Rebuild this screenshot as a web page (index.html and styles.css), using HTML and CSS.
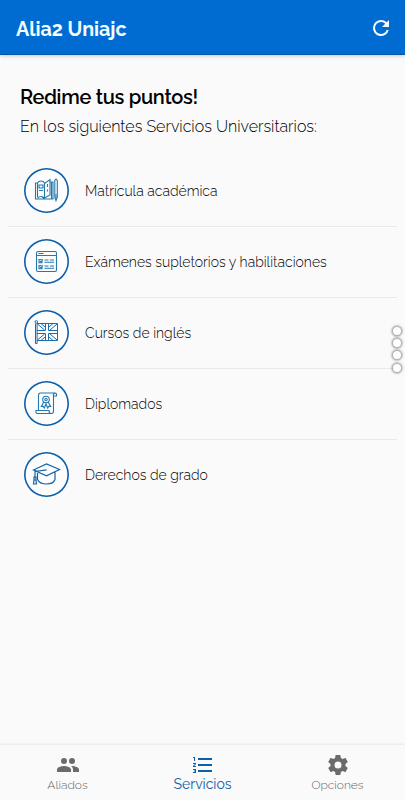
FILE: index.html
```html
<!DOCTYPE html>
<html lang="es">

<head>
    <meta charset="UTF-8">
    <meta name="viewport" content="width=device-width, initial-scale=1.0">
    <title>Alia2 Uniajc</title>
    <link rel="stylesheet" href="styles.css">
</head>

<body>
    <header class="app-bar">
        <h1 class="app-title">Alia2 Uniajc</h1>
        <svg class="refresh" viewBox="0 0 24 24">
            <path d="M17.65 6.35A7.96 7.96 0 0 0 12 4a8 8 0 1 0 7.73 10h-2.08A6 6 0 1 1 12 6c1.66 0 3.14.69 4.22 1.78L13 11h7V4z" />
        </svg>
    </header>

    <main class="content">
        <div class="intro">
            <h2 class="intro-title">Redime tus puntos!</h2>
            <p class="intro-text">En los siguientes Servicios Universitarios:</p>
        </div>

        <ul class="services">
            <li class="service">
                <span class="service-icon">
                    <!-- Books and pencil -->
                    <svg viewBox="0 0 46 46">
                        <path d="M14.500 30V16q1-2 3.500-2t3.500 2v15q-1.500-1.500-3.500-1.500T14.500 31M21.500 31V16.500l5.500-4V28l-5.500 3M27 15h3v17H12.500V16h2M28.500 15v17M16 18h4v3h-4zM16 23.500h4M24.500 17v3M24.500 22.500v2M19 30l2.500 1.500" />
                        <path d="M31.800 30V13.500l1.200-1.500 1.300 1.500V30zM31.800 30l1.200 3.500 1.300-3.500M32 28h2" />
                    </svg>
                </span>
                <span class="service-name">Matrícula académica</span>
            </li>
            <li class="service">
                <span class="service-icon">
                    <!-- Exam checklist -->
                    <svg viewBox="0 0 46 46">
                        <rect x="13.500" y="13.500" width="20" height="20" rx="1.500" />
                        <path d="M13.500 17.500h20M15.500 15.500h5" />
                        <path d="M18.500 21.500H16v3.200h3v-1.500M17 22.800l1 1 2-2.500M18.500 27.500H16v3.200h3v-1.500M17 28.800l1 1 2-2.500M21.500 22h4M27 22h4M21.500 24.300h9.500M21.500 28h4M27 28h4M21.500 30.300h9.500" />
                    </svg>
                </span>
                <span class="service-name">Exámenes supletorios y habilitaciones</span>
            </li>
            <li class="service">
                <span class="service-icon">
                    <!-- Flag -->
                    <svg class="flag" viewBox="0 0 46 46">
                        <circle cx="13.300" cy="12.900" r="1.300" />
                        <path d="M12.500 14.500V34.500h1.600V14.500" />
                        <path d="M14 14.500h20.500v17H14M22.500 14.500v7H14M25.500 14.500v7h9M22.500 31.500v-7H14M25.500 31.500v-7h9" />
                        <path d="M14.500 15l7 6M34 15l-7 6M14.500 31l7-6M34 31l-7-6M18 14.500l4.500 3.800M30 14.500l-4.500 3.800M18 31.500l4.500-3.800M30 31.500l-4.500-3.800" />
                    </svg>
                </span>
                <span class="service-name">Cursos de inglés</span>
            </li>
            <li class="service">
                <span class="service-icon">
                    <!-- Diploma -->
                    <svg viewBox="0 0 46 46">
                        <path d="M15.500 30.500V15.500q0-2.500 2-2.500h14.500q2 0 1.500 3h-3v15q0 2.500-2 2.500h-14q-2 0-1.500-3h13q0 3 2 3M30.500 16q-.5-2.500 1.500-3" />
                        <circle cx="23" cy="19.500" r="3.300" />
                        <circle cx="23" cy="19.500" r="1.200" />
                        <path d="M20.800 22l-2.500 4.500 2-.1 1 1.600 1.700-4 1.700 4 1-1.600 2 .1-2.500-4.500" />
                    </svg>
                </span>
                <span class="service-name">Diplomados</span>
            </li>
            <li class="service">
                <span class="service-icon">
                    <!-- Graduation cap -->
                    <svg class="cap" viewBox="0 0 46 46">
                        <path d="M10.500 19L23.500 13 36.500 18.500 23.500 24.800zM14.500 22v6.500q2 4.500 9 4.500t8.500-4.500V21M23.500 18.800l-11.500 1.700V27" />
                        <path d="M11 26h2v3l.5 4h-3l.5-4zM11 29h2" />
                    </svg>
                </span>
                <span class="service-name">Derechos de grado</span>
            </li>
        </ul>
    </main>

    <div class="page-dots">
        <span></span>
        <span></span>
        <span></span>
        <span></span>
    </div>

    <nav class="bottom-nav">
        <a class="nav-item">
            <svg viewBox="0 0 24 24">
                <path d="M16 11a3 3 0 1 0 0-6 3 3 0 0 0 0 6zm-8 0a3 3 0 1 0 0-6 3 3 0 0 0 0 6zm0 2c-2.330 0-7 1.170-7 3.500V19h14v-2.500C15 14.170 10.330 13 8 13zm8 0c-.29 0-.62.02-.97.05 1.160.84 1.970 1.970 1.970 3.450V19h6v-2.500c0-2.330-4.670-3.500-7-3.500z" />
            </svg>
            <span class="nav-label">Aliados</span>
        </a>
        <a class="nav-item active">
            <svg viewBox="0 0 24 24">
                <path d="M2 17h2v.5H3v1h1v.5H2v1h3v-4H2zm1-9h1V4H2v1h1zm-1 3h1.800L2 13.100v.9h3v-1H3.200L5 10.900V10H2zm5-6v2h14V5zm0 14h14v-2H7zm0-6h14v-2H7z" />
            </svg>
            <span class="nav-label">Servicios</span>
        </a>
        <a class="nav-item">
            <svg viewBox="0 0 24 24">
                <path d="M19.430 12.980c.04-.32.07-.64.07-.98s-.03-.66-.07-.98l2.110-1.650c.19-.15.24-.42.12-.64l-2-3.460c-.12-.22-.39-.3-.61-.22l-2.490 1c-.52-.4-1.080-.73-1.690-.98l-.38-2.650A.488.488 0 0 0 14 2h-4c-.25 0-.46.18-.49.42l-.38 2.650c-.61.25-1.170.59-1.690.98l-2.490-1c-.23-.09-.49 0-.61.22l-2 3.460c-.13.22-.07.49.12.64l2.110 1.650c-.04.32-.07.65-.07.98s.03.66.07.98l-2.110 1.650c-.19.15-.24.42-.12.64l2 3.460c.12.22.39.3.61.22l2.490-1c.52.4 1.080.73 1.690.98l.38 2.650c.03.24.24.42.49.42h4c.25 0 .46-.18.49-.42l.38-2.650c.61-.25 1.170-.59 1.690-.98l2.490 1c.23.09.49 0 .61-.22l2-3.460c.12-.22.07-.49-.12-.64zM12 15.500a3.500 3.500 0 1 1 0-7 3.500 3.500 0 0 1 0 7z" />
            </svg>
            <span class="nav-label">Opciones</span>
        </a>
    </nav>
</body>

</html>
```
FILE: styles.css
```css
body {
    margin: 0;
    height: 100vh;
    display: flex;
    flex-direction: column;
    overflow: hidden;
    background-color: #fafafa;
    color: #000;
    font-family: Raleway, Lato, sans-serif;
}

.app-bar {
    display: flex;
    align-items: center;
    justify-content: space-between;
    box-sizing: border-box;
    height: 55px;
    padding: 2px 12px 0 16px;
    background-color: #006cd2;
    border-bottom: 1px solid #0856a8;
    box-shadow: 0 1px 4px rgba(0, 0, 0, 0.2);
    color: #f4fdff;
}

.app-title {
    margin: 2px 0 0;
    font-size: 19.700px;
    line-height: 24px;
    font-weight: 700;
}

.refresh {
    width: 24px;
    height: 24px;
    fill: #f4fbff;
}

.content {
    flex: 1;
}

.intro {
    padding: 30px 20px 0;
}

.intro-title {
    margin: 0;
    font-size: 20px;
    line-height: 24px;
    font-weight: 600;
    letter-spacing: -0.3px;
}

.intro-text {
    margin: 8px 0 0;
    font-size: 16px;
    line-height: 20px;
    font-weight: 300;
}

.services {
    margin: 19px 8px 0;
    padding: 0;
    list-style: none;
}

.service {
    display: flex;
    align-items: center;
    box-sizing: border-box;
    height: 70.900px;
    padding-left: 16px;
    border-bottom: 1px solid #eaeaea;
}

.service:last-child {
    border-bottom-color: transparent;
}

.service-icon {
    box-sizing: border-box;
    width: 45px;
    height: 45px;
    margin-bottom: 1px;
    border-radius: 50%;
    background-color: #fdfdfd;
    box-shadow: inset 0 0 0 1.600px #0b5fac;
}

.service-icon svg {
    display: block;
    width: 46px;
    height: 46px;
    margin: -1px 0 0 -1px;
    fill: none;
    stroke: #2279ae;
    stroke-width: 1.1;
}

.service-icon .flag {
    stroke: #1a6cac;
    stroke-width: 1;
}

.service-icon .cap {
    stroke: #1463a5;
    stroke-width: 1.2;
}

.service-name {
    margin-left: 16px;
    font-size: 13.970px;
    line-height: 20px;
    font-weight: 300;
    white-space: nowrap;
}

/* Floating dots over the right edge */
.page-dots {
    position: absolute;
    top: 326.500px;
    right: 4px;
    display: grid;
    gap: 4.400px;
}

.page-dots span {
    width: 8px;
    height: 8px;
    border-radius: 50%;
    background-color: #fff;
    box-shadow: 0 0 2px 1.500px rgba(0, 0, 0, 0.35);
}

.bottom-nav {
    display: flex;
    height: 55px;
    box-shadow: 0 -1px 2px rgba(0, 0, 0, 0.08);
}

.nav-item {
    flex: 1;
    display: flex;
    flex-direction: column;
    align-items: center;
    padding-top: 8px;
    color: #666;
    fill: #6b6b6b;
}

.nav-item svg {
    width: 24px;
    height: 24px;
}

.nav-label {
    font-size: 12px;
    line-height: 16px;
    font-weight: 300;
}

.active {
    color: #0b62a8;
    fill: #0b5fac;
}

.active .nav-label {
    font-size: 14px;
    line-height: 15px;
    font-weight: 400;
}
```
